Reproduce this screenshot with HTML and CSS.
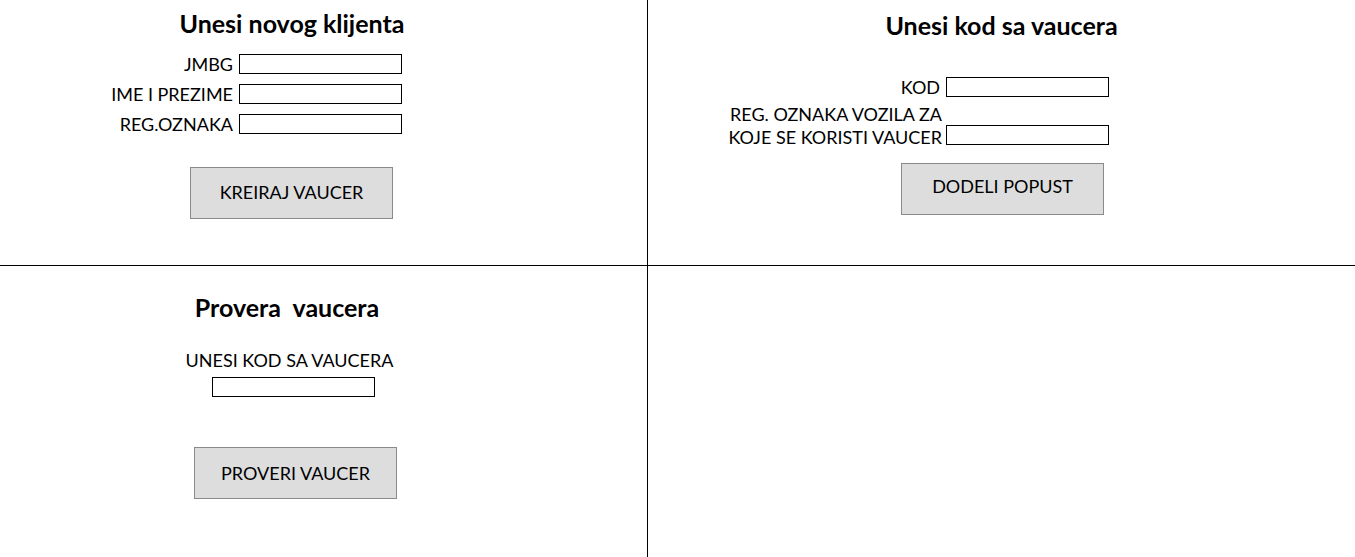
FILE: index.html
```html
<!DOCTYPE html>
<html>
<head>
<meta charset="utf-8">
<link rel="stylesheet" href="styles.css">
</head>
<body>
<div class="board">
  <section class="cell cell-tl">
    <div class="panel panel-new">
      <h2 class="title">Unesi novog klijenta</h2>
      <div class="form">
        <label class="lbl">JMBG</label><span class="field"></span>
        <label class="lbl">IME I PREZIME</label><span class="field"></span>
        <label class="lbl">REG.OZNAKA</label><span class="field"></span>
      </div>
      <button class="btn btn-new">KREIRAJ VAUCER</button>
    </div>
  </section>
  <section class="cell cell-tr">
    <div class="panel panel-code">
      <h2 class="title">Unesi kod sa vaucera</h2>
      <div class="form form-code">
        <label class="lbl">KOD</label><span class="field"></span>
        <label class="lbl lbl-two">REG. OZNAKA VOZILA ZA<br>KOJE SE KORISTI VAUCER</label><span class="field field-end"></span>
      </div>
      <button class="btn btn-code">DODELI POPUST</button>
    </div>
  </section>
  <section class="cell cell-bl">
    <div class="panel panel-check">
      <h2 class="title">Provera&nbsp; vaucera</h2>
      <div class="lbl-center">UNESI KOD SA VAUCERA</div>
      <span class="field field-center"></span>
      <button class="btn btn-check">PROVERI VAUCER</button>
    </div>
  </section>
  <section class="cell cell-br"></section>
</div>
</body>
</html>
```

FILE: styles.css
```css
* { box-sizing: border-box; }
html, body { margin: 0; padding: 0; background: #fff; }
body {
  font-family: Lato, "Open Sans", sans-serif;
  color: #000;
  width: 1355px;
  height: 557px;
  overflow: hidden;
}
.board {
  display: grid;
  grid-template-columns: 647px 1px 707px;
  grid-template-rows: 265px 1px 291px;
  width: 1355px;
  height: 557px;
  background: #000;
}
.cell { background: #fff; }
.cell-tl { grid-column: 1; grid-row: 1; }
.cell-tr { grid-column: 3; grid-row: 1; }
.cell-bl { grid-column: 1; grid-row: 3; }
.cell-br { grid-column: 3; grid-row: 3; }

.title {
  margin: 0;
  font-size: 25px;
  font-weight: 700;
  line-height: 30px;
  text-align: center;
  white-space: nowrap;
}
.lbl, .lbl-center {
  font-size: 18px;
  line-height: 20px;
  text-align: right;
  white-space: nowrap;
}
.field {
  display: block;
  width: 163px;
  height: 20px;
  border: 1px solid #000;
  background: #fff;
}
.btn {
  display: block;
  width: 203px;
  height: 52px;
  background: #dddddd;
  border: 1px solid #8a8a8a;
  font-family: inherit;
  font-size: 18px;
  color: #000;
  padding: 0 0 2px;
}

/* top-left */
.panel-new { margin-left: 100px; width: 384px; padding-top: 8px; }
.panel-new .form {
  display: grid;
  grid-template-columns: 133px 163px;
  column-gap: 6px;
  row-gap: 10px;
  align-items: center;
  margin-top: 16px;
}
.btn-new { margin: 33px 0 0 90px; }

/* top-right */
.panel-code { width: 707px; padding-top: 10px; }
.form-code {
  display: grid;
  grid-template-columns: 250px 163px;
  column-gap: 6px;
  row-gap: 6px;
  align-items: center;
  margin: 37px 0 0 42px;
}
.lbl-two { line-height: 23px; margin-right: -2px; }
.field-end { align-self: end; margin-bottom: 4px; }
.btn-code { margin: 14px 0 0 253px; padding-bottom: 6px; }

/* bottom-left */
.panel-check { padding-top: 26px; }
.panel-check .title { width: 574px; }
.lbl-center { text-align: center; width: 579px; margin-top: 28px; }
.field-center { margin: 7px 0 0 212px; }
.btn-check { margin: 50px 0 0 194px; padding-bottom: 0; }
```
